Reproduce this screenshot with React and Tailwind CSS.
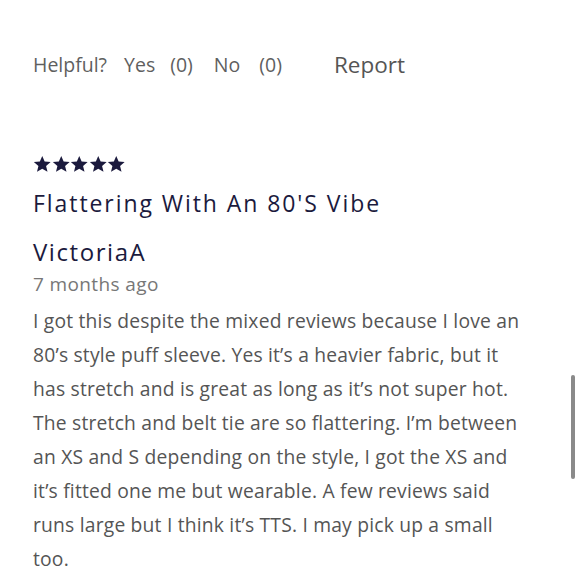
const body = "I got this despite the mixed reviews because I love an 80\u2019s style puff sleeve. Yes it\u2019s a heavier fabric, but it has stretch and is great as long as it\u2019s not super hot. The stretch and belt tie are so flattering. I\u2019m between an XS and S depending on the style, I got the XS and it\u2019s fitted one me but wearable. A few reviews said runs large but I think it\u2019s TTS. I may pick up a small too."

const Stars = () => (
  <div className="flex">
    {[0, 1, 2, 3, 4].map((i) => (
      <svg key={i} width="18.5" height="18" viewBox="0 0 24 24" className="text-[#1b1a3d]">
        <path fill="currentColor" d="M12 1.2l3.2 7.4 8 .6-6.1 5.3 1.9 7.9L12 18.2l-7 4.2 1.9-7.9L.8 9.2l8-.6z" />
      </svg>
    ))}
  </div>
)

const App = () => {
  return (
    <div className="relative h-[580px] w-[580px] overflow-hidden bg-white font-['Open_Sans',sans-serif]">
      <div className="pl-[33px] pr-[53px]">
        <div className="mt-[49px] flex h-[32px] items-center text-[19.5px] leading-[32px] text-[#5f5f5f]">
          <span>Helpful?</span>
          <span className="ml-[17px]">Yes</span>
          <span className="ml-[15px]">(0)</span>
          <span className="ml-[21px]">No</span>
          <span className="ml-[19px]">(0)</span>
          <span className="ml-[52px] text-[22.5px] text-[#555]">Report</span>
        </div>

        <div className="mt-[74px]">
          <Stars />
        </div>
        <h2 className="mt-[15px] text-[23px] leading-[30px] tracking-[0.084em] text-[#1b1a3d]">
          Flattering With An 80'S Vibe
        </h2>
        <p className="mt-[19px] text-[24px] leading-[30px] tracking-[0.065em] text-[#1b1a3d]">VictoriaA</p>
        <p className="mt-[4px] text-[19px] leading-[26px] tracking-[0.02em] text-[#777]">7 months ago</p>
        <p className="mt-[7px] text-[19.3px] leading-[34px] tracking-[0.01em] text-[#555]">{body}</p>
      </div>
      <div className="absolute left-[571px] top-[375px] h-[104px] w-[4px] rounded-full bg-[#8a8a8a]" />
    </div>
  )
}

export default App
